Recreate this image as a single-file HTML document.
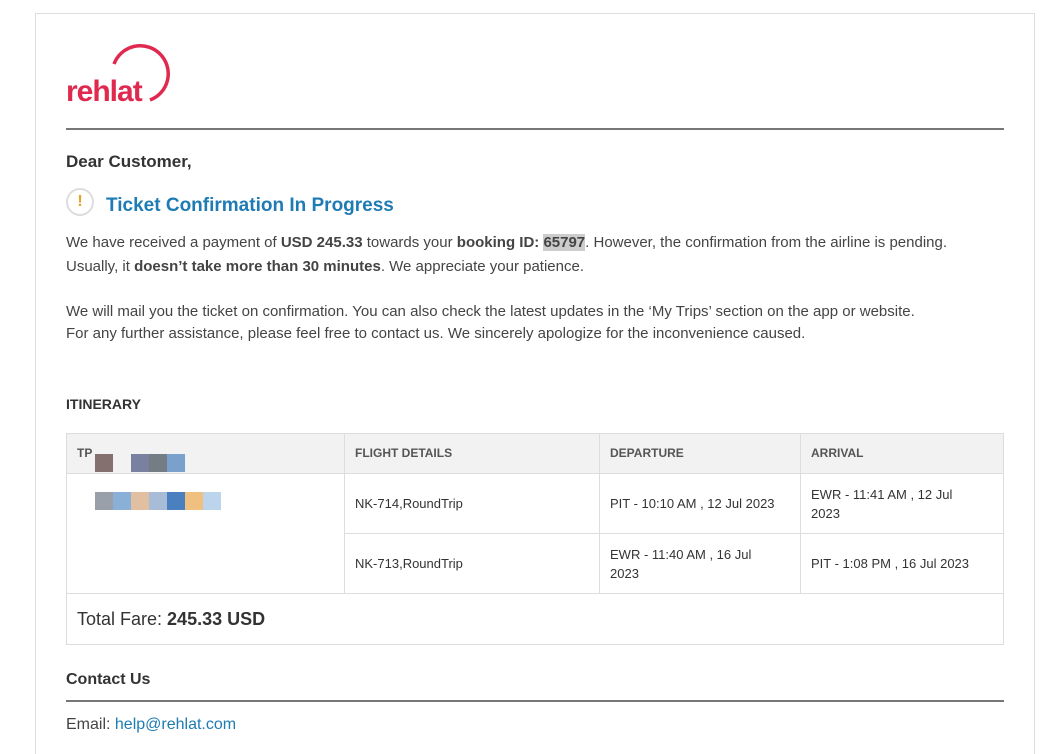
<!DOCTYPE html>
<html><head><meta charset="utf-8"><style>
body{margin:0;background:#fff;font-family:"Liberation Sans",sans-serif;color:#333;}
.box{position:absolute;left:35px;top:13px;width:998px;height:740px;border:1px solid #ddd;border-bottom:none;}
.a{position:absolute;white-space:nowrap;}
.p{font-size:15px;color:#444;}
td,th{border:1px solid #ddd;font-size:13px;color:#333;text-align:left;vertical-align:middle;padding:0 10px;line-height:19px;}
th{background:#f2f2f2;font-weight:bold;color:#555;font-size:12px;}
table{border-collapse:collapse;position:absolute;left:66px;top:433px;width:938px;}
</style></head><body>
<div class="box"></div>
<svg class="a" style="left:64px;top:42px" width="110" height="64" viewBox="0 0 110 64">
<path d="M50 22 A28 28 0 1 1 86 58" fill="none" stroke="#e0294f" stroke-width="3.5"/>
<text x="2" y="59" font-family="Liberation Sans" font-size="30" font-weight="bold" fill="#e0294f" letter-spacing="-1">rehlat</text>
</svg>
<div class="a" style="left:66px;top:128px;width:938px;height:2px;background:#777"></div>
<div class="a" style="left:66px;top:152px;font-size:17px;font-weight:bold;color:#333">Dear Customer,</div>
<div class="a" style="left:66px;top:188px;width:28px;height:28px;border:2px solid #ddd;border-radius:50%;box-sizing:border-box;text-align:center;line-height:24px;color:#e8a020;font-weight:bold;font-size:16px">!</div>
<div class="a" style="left:106px;top:195px;font-size:19px;font-weight:bold;color:#1e7bb4">Ticket Confirmation In Progress</div>
<div class="a p" style="left:66px;top:234px">We have received a payment of <b>USD 245.33</b> towards your <b>booking ID: <span style="background:#ccc">65797</span></b>. However, the confirmation from the airline is pending.</div>
<div class="a p" style="left:66px;top:258px">Usually, it <b>doesn’t take more than 30 minutes</b>. We appreciate your patience.</div>
<div class="a p" style="left:66px;top:303px">We will mail you the ticket on confirmation. You can also check the latest updates in the ‘My Trips’ section on the app or website.</div>
<div class="a p" style="left:66px;top:325px">For any further assistance, please feel free to contact us. We sincerely apologize for the inconvenience caused.</div>
<div class="a" style="left:66px;top:396px;font-size:14px;font-weight:bold;color:#333">ITINERARY</div>
<table>
<tr style="height:40px"><th style="width:257px">TP</th><th style="width:234px">FLIGHT DETAILS</th><th style="width:180px">DEPARTURE</th><th>ARRIVAL</th></tr>
<tr style="height:60px"><td rowspan="2" style="border-bottom:none"></td><td>NK-714,RoundTrip</td><td>PIT - 10:10 AM , 12 Jul 2023</td><td>EWR - 11:41 AM , 12 Jul<br>2023</td></tr>
<tr style="height:60px"><td>NK-713,RoundTrip</td><td>EWR - 11:40 AM , 16 Jul<br>2023</td><td>PIT - 1:08 PM , 16 Jul 2023</td></tr>
<tr style="height:51px"><td colspan="4" style="font-size:18px;color:#333">Total Fare: <b>245.33 USD</b></td></tr>
</table>
<div class="a" style="left:95px;top:454px;display:flex"><i style="width:18px;height:18px;background:#857070"></i><i style="width:18px"></i><i style="width:18px;height:18px;background:#7a80a0"></i><i style="width:18px;height:18px;background:#747c84"></i><i style="width:18px;height:18px;background:#7aa0cc"></i></div>
<div class="a" style="left:95px;top:492px;display:flex"><i style="width:18px;height:18px;background:#9aa0aa"></i><i style="width:18px;height:18px;background:#8ab0d8"></i><i style="width:18px;height:18px;background:#e0c0a0"></i><i style="width:18px;height:18px;background:#a8bcd8"></i><i style="width:18px;height:18px;background:#4a80c0"></i><i style="width:18px;height:18px;background:#f0c080"></i><i style="width:18px;height:18px;background:#bcd4ec"></i></div>
<div class="a" style="left:66px;top:671px;font-size:16px;font-weight:bold;color:#333">Contact Us</div>
<div class="a" style="left:66px;top:700px;width:938px;height:2px;background:#777"></div>
<div class="a" style="left:66px;top:716px;font-size:16px;color:#444">Email: <span style="color:#1e7bb4">help@rehlat.com</span></div>
</body></html>
